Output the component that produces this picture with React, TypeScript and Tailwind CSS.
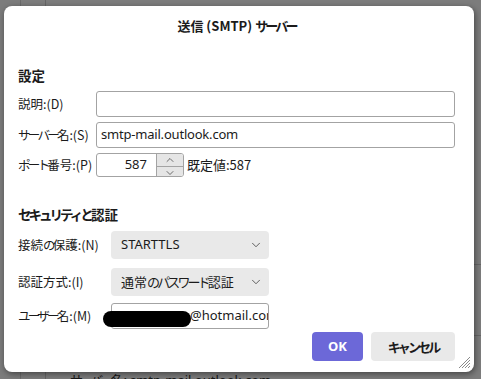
import { ChevronDown, ChevronUp } from "lucide-react";

const latin = "font-['Noto_Sans','Noto_Sans_CJK_JP',sans-serif]";

// kana are set proportional in the original UI font, so tighten them
function J({ t }: { t: string }) {
  const parts = t.split(/([\u3040-\u30ff]+)/);
  return (
    <>
      {parts.map((p, i) =>
        /^[\u3040-\u30ff]+$/.test(p) ? (
          <span key={i} className="tracking-[-0.22em]">{p}</span>
        ) : (
          <span key={i}>{p}</span>
        )
      )}
    </>
  );
}

function Label({ text, w }: { text: string; w: string }) {
  return (
    <div className={`${w} shrink-0 whitespace-nowrap text-[12.5px] leading-[20px]`}>
      <J t={text} />
    </div>
  );
}

function Select({ value, jp }: { value: string; jp?: boolean }) {
  return (
    <div className="w-[158px] h-[28px] bg-[#e9e9e9] rounded-[4px] flex items-center pl-[10px] pr-[6px]">
      <span className={`flex-1 whitespace-nowrap text-[13px] ${jp ? "" : latin}`}>
        <J t={value} />
      </span>
      <ChevronDown size={14} strokeWidth={1.3} className="text-[#333]" />
    </div>
  );
}

export default function App() {
  return (
    <div className="relative w-[481px] h-[379px] overflow-hidden bg-[#7c7c7c] text-[#1b1b1b] font-['Noto_Sans_CJK_JP',sans-serif]">
      {/* dimmed parent window behind the dialog */}
      <div className="absolute left-[20px] top-0 h-full w-px bg-[#6a6a6a]" />
      <div className="absolute left-[45px] top-0 h-full w-px bg-[#666]" />
      <div className="absolute right-0 top-[264px] w-[8px] h-px bg-[#666]" />
      <div className="absolute right-0 top-[335px] w-[8px] h-px bg-[#666]" />
      <div className="absolute left-[70px] top-[370px] text-[13px] text-[#161616] whitespace-nowrap">
        <J t="サーバー名: " />
        <span className={latin}>smtp-mail.outlook.com</span>
      </div>

      {/* dialog */}
      <div className="relative ml-[4px] mt-[6px] w-[470px] h-[366px] bg-white rounded-[8px] shadow-[1px_2px_6px_rgba(0,0,0,0.45)] pl-[14px] pr-[19px] pt-[10px]">
        <div className="h-[20px] text-center text-[13px] font-semibold leading-[20px] whitespace-nowrap">
          <J t="送信 (SMTP) サーバー" />
        </div>

        <div className="mt-[29px] text-[13.5px] font-bold leading-[20px]">設定</div>

        <div className="mt-[6px] flex items-center">
          <Label text="説明:(D)" w="w-[78px]" />
          <div className="flex-1 h-[26px] border border-[#a3a3a3] rounded-[3px]" />
        </div>

        <div className="mt-[5px] flex items-center">
          <Label text="サーバー名:(S)" w="w-[78px]" />
          <div className={`flex-1 h-[26px] border border-[#a3a3a3] rounded-[3px] flex items-center pl-[4px] text-[13px] tracking-[-0.2px] ${latin}`}>
            smtp-mail.outlook.com
          </div>
        </div>

        <div className="mt-[5px] flex items-center">
          <Label text="ポート番号:(P)" w="w-[78px]" />
          <div className="w-[88px] h-[24px] border border-[#a3a3a3] rounded-[3px] flex overflow-hidden">
            <div className={`flex-1 flex items-center justify-end pr-[9px] text-[13px] ${latin}`}>587</div>
            <div className="w-[27px] flex flex-col border-l border-[#a3a3a3] bg-[#e5e5e5]">
              <div className="flex-1 flex items-center justify-center border-b border-[#a3a3a3]">
                <ChevronUp size={12} strokeWidth={1.2} />
              </div>
              <div className="flex-1 flex items-center justify-center">
                <ChevronDown size={12} strokeWidth={1.2} />
              </div>
            </div>
          </div>
          <div className="ml-[3px] text-[13px] whitespace-nowrap">既定値:587</div>
        </div>

        <div className="mt-[27px] text-[13.5px] font-bold leading-[20px] whitespace-nowrap">
          <J t="セキュリティと認証" />
        </div>

        <div className="mt-[7px] flex items-center">
          <Label text="接続の保護:(N)" w="w-[93px]" />
          <Select value="STARTTLS" />
        </div>

        <div className="mt-[9px] flex items-center">
          <Label text="認証方式:(I)" w="w-[93px]" />
          <Select value="通常のパスワード認証" jp />
        </div>

        <div className="mt-[7px] flex items-center">
          <Label text="ユーザー名:(M)" w="w-[93px]" />
          <div className={`relative w-[158px] h-[26px] border border-[#a3a3a3] rounded-[3px] overflow-hidden flex items-center pl-[78px] text-[13px] whitespace-nowrap ${latin}`}>
            @hotmail.com
          </div>
        </div>
        {/* redaction blob over the user name */}
        <div className="absolute left-[99px] top-[305px] w-[88px] h-[16px] bg-black rounded-full" />

        <div className="mt-[3px] flex justify-end gap-[8px]">
          <button className={`w-[51px] h-[29px] rounded-[4px] bg-[#6c68d8] text-white text-[13px] font-bold ${latin}`}>OK</button>
          <button className="w-[84px] h-[29px] rounded-[4px] bg-[#e9e9e9] text-[13px] font-semibold whitespace-nowrap">
            <J t="キャンセル" />
          </button>
        </div>

        {/* resize grip */}
        <svg className="absolute right-[3px] bottom-[3px]" width="14" height="14" viewBox="0 0 14 14">
          <path d="M13 2 L2 13 M13 5 L5 13 M13 8 L8 13 M13 11 L11 13" stroke="#8a8a8a" strokeWidth="1" />
        </svg>
      </div>
    </div>
  );
}
